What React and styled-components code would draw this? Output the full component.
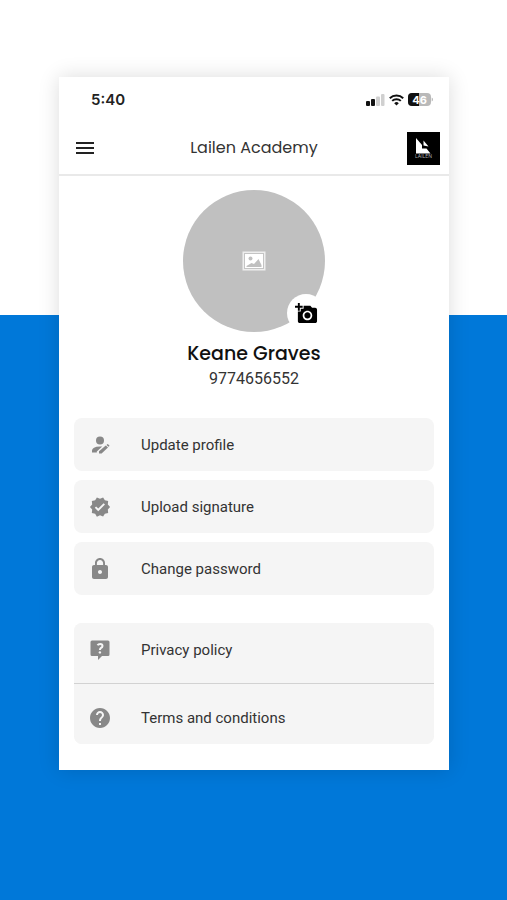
import React from "react";
import styled, { createGlobalStyle } from "styled-components";
import { MdMenu, MdAddAPhoto, MdVerified, MdLock, MdHelp } from "react-icons/md";

const GlobalStyle = createGlobalStyle`
  *, *::before, *::after { box-sizing: border-box; }
  body { margin: 0; }
  button { border: 0; padding: 0; background: none; font: inherit; color: inherit; cursor: pointer; }
`;

const Page = styled.div`
  min-height: 100vh;
  padding: 77px 58px 96px 59px;
  background: linear-gradient(#fff 35%, #0078d9 35%);
  font-family: Poppins, Inter, sans-serif;
  color: #222;
`;

const Card = styled.main`
  max-width: 480px;
  margin: 0 auto;
  padding-bottom: 26px;
  background: #fff;
  box-shadow: 0 0 20px rgba(0, 0, 0, 0.14);
`;

const StatusBar = styled.div`
  display: flex;
  align-items: center;
  justify-content: space-between;
  height: 45px;
  padding: 0 16px 0 32px;
`;

const Clock = styled.time`
  font-family: Inter, sans-serif;
  font-size: 15px;
  font-weight: 600;
  line-height: 20px;
`;

const StatusIcons = styled.div`
  display: flex;
  align-items: center;
  gap: 4px;
`;

const Header = styled.header`
  display: grid;
  grid-template-columns: 33px 1fr 33px;
  align-items: center;
  height: 54px;
  padding: 0 9px;
  border-bottom: 2px solid #e9e9e9;
`;

const MenuButton = styled.button`
  display: flex;
  padding-left: 5px;
  font-size: 24px;
`;

const Title = styled.h1`
  margin: 0;
  font-size: 16px;
  font-weight: 400;
  line-height: 24px;
  text-align: center;
  color: #333;
`;

const Brand = styled.a`
  display: flex;
  width: 33px;
  height: 33px;
  background: #000;
`;

const Profile = styled.section`
  display: flex;
  flex-direction: column;
  align-items: center;
  padding-top: 14px;
`;

const Avatar = styled.div`
  position: relative;
  display: grid;
  place-items: center;
  width: 142px;
  height: 142px;
  border-radius: 50%;
  background: #c0c0c0;
`;

const PhotoButton = styled.button`
  position: absolute;
  right: 0;
  bottom: 0;
  display: grid;
  place-items: center;
  width: 38px;
  height: 38px;
  border-radius: 50%;
  background: #fff;
  font-size: 23px;
  color: #000;
`;

const Name = styled.h2`
  margin: 9px 0 0;
  font-size: 19px;
  font-weight: 500;
  line-height: 25px;
  color: #111;
`;

const Phone = styled.p`
  margin: 0;
  font-family: Roboto, sans-serif;
  font-size: 16px;
  line-height: 26px;
  color: #333;
`;

const Menu = styled.nav`
  display: flex;
  flex-direction: column;
  gap: 28px;
  margin: 26px 15px 0;
`;

const Group = styled.div`
  display: flex;
  flex-direction: column;
  gap: ${({ $joined }) => ($joined ? "0" : "9px")};
  border-radius: 8px;
  background: ${({ $joined }) => ($joined ? "#f5f5f5" : "none")};
`;

const Divider = styled.hr`
  width: 100%;
  height: 1px;
  margin: 7px 0;
  border: 0;
  background: #d2d2d2;
`;

const Item = styled.button`
  display: flex;
  align-items: center;
  gap: 29px;
  height: 53px;
  padding: 0 14px;
  border-radius: 8px;
  background: #f5f5f5;
  font-family: Roboto, sans-serif;
  font-size: 15px;
  line-height: 20px;
  text-align: left;
  color: #333;
`;

const ItemIcon = styled.span`
  display: grid;
  flex: none;
  place-items: center;
  width: 24px;
  height: 24px;
  font-size: ${({ $size }) => $size}px;
  color: #888;
`;

const Signal = () => (
  <svg width="19" height="12" viewBox="0 0 19 12" aria-hidden="true">
    <rect x="0" y="7" width="4" height="5" rx="1" fill="#111" />
    <rect x="5" y="5" width="4" height="7" rx="1" fill="#111" />
    <rect x="10" y="2.5" width="4" height="9.5" rx="1" fill="#d0d0d0" />
    <rect x="15" y="0" width="3.5" height="12" rx="1" fill="#d0d0d0" />
  </svg>
);

const Wifi = () => (
  <svg width="15" height="12" viewBox="0 0 15 12" fill="none" stroke="#111" strokeWidth="2" aria-hidden="true">
    <path d="M.8 4.2a9.7 9.7 0 0 1 13.4 0M3.2 6.9a6.2 6.2 0 0 1 8.6 0" />
    <path d="M5.2 9.2a3.3 3.3 0 0 1 4.6 0L7.5 11.6z" fill="#111" stroke="none" />
  </svg>
);

const Battery = () => (
  <svg width="25" height="13" viewBox="0 0 25 13" role="img" aria-label="Battery 46%">
    <rect width="23" height="13" rx="4" fill="#b9b9b9" />
    <path d="M4 0H11V13H4A4 4 0 0 1 0 9V4A4 4 0 0 1 4 0Z" fill="#111" />
    <path d="M23.7 4.4Q25 5 25 6.5T23.7 8.6Z" fill="#b9b9b9" />
    <text x="11.5" y="10.5" textAnchor="middle" fill="#fff" fontFamily="Inter, sans-serif" fontSize="11" fontWeight="700">46</text>
  </svg>
);

const Logo = () => (
  <svg width="33" height="33" viewBox="0 0 33 33" role="img" aria-label="Lailen">
    <path d="M9 6L15 13V16.5H19.5L23.5 21.5H9Z" fill="#fff" />
    <path d="M16.5 8.5L21.5 14.5L16.5 13.5Z" fill="#fff" />
    <text x="16.5" y="26" textAnchor="middle" fill="#aaa" fontFamily="Inter, sans-serif" fontSize="5">LAILEN</text>
  </svg>
);

const Placeholder = () => (
  <svg width="24" height="20" viewBox="0 0 24 20" aria-hidden="true">
    <rect x=".5" y=".5" width="23" height="19" fill="#eee" />
    <rect x="2.5" y="2.5" width="19" height="15" fill="#fff" stroke="#c4c4c4" />
    <circle cx="8.5" cy="7.5" r="2" fill="#c0c0c0" />
    <path d="M4.5 16V15L9.5 12L12 13L16.5 8L19.5 14V16Z" fill="#c0c0c0" />
  </svg>
);

const PersonEdit = () => (
  <svg width="24" height="24" viewBox="0 0 24 24" fill="currentColor" aria-hidden="true">
    <circle cx="12" cy="7.6" r="4" />
    <path d="M4 19.4V17.6Q4 13.6 12 13.4H14.2L8.8 18.6V19.4Z" />
    <path d="M11 20.5V18.2L17.8 12.6L20 14.4L13.6 20.5Z" />
    <path d="M18.5 12L19.3 11.3Q19.8 10.9 20.3 11.4L21.2 12.3Q21.6 12.8 21.2 13.2L20.6 13.8Z" />
  </svg>
);

const CommentHelp = () => (
  <svg width="24" height="24" viewBox="0 0 24 24" aria-hidden="true">
    <path d="M4 2.5H20Q21.5 2.5 21.5 4V16.5Q21.5 18 20 18H14L10 22V18H4Q2.5 18 2.5 16.5V4Q2.5 2.5 4 2.5Z" fill="currentColor" />
    <path d="M9.5 7.2Q10.3 6 12.2 6Q14.5 6 14.5 8Q14.5 9.2 12.8 10.1Q11.9 10.7 11.9 12" fill="none" stroke="#f5f5f5" strokeWidth="2" />
    <circle cx="11.9" cy="14.4" r="1.2" fill="#f5f5f5" />
  </svg>
);

const MenuItem = ({ icon: Icon, size = 24, children }) => (
  <Item type="button">
    <ItemIcon $size={size}><Icon /></ItemIcon>
    {children}
  </Item>
);

export default function App() {
  return (
    <>
      <GlobalStyle />
      <Page>
        <Card>
          <StatusBar>
            <Clock>5:40</Clock>
            <StatusIcons><Signal /><Wifi /><Battery /></StatusIcons>
          </StatusBar>
          <Header>
            <MenuButton type="button" aria-label="Open menu"><MdMenu /></MenuButton>
            <Title>Lailen Academy</Title>
            <Brand href="#" aria-label="Lailen home"><Logo /></Brand>
          </Header>
          <Profile>
            <Avatar>
              <Placeholder />
              <PhotoButton type="button" aria-label="Add a photo"><MdAddAPhoto /></PhotoButton>
            </Avatar>
            <Name>Keane Graves</Name>
            <Phone>9774656552</Phone>
          </Profile>
          <Menu aria-label="Account">
            <Group>
              <MenuItem icon={PersonEdit}>Update profile</MenuItem>
              <MenuItem icon={MdVerified} size={22}>Upload signature</MenuItem>
              <MenuItem icon={MdLock}>Change password</MenuItem>
            </Group>
            <Group $joined>
              <MenuItem icon={CommentHelp}>Privacy policy</MenuItem>
              <Divider />
              <MenuItem icon={MdHelp}>Terms and conditions</MenuItem>
            </Group>
          </Menu>
        </Card>
      </Page>
    </>
  );
}
